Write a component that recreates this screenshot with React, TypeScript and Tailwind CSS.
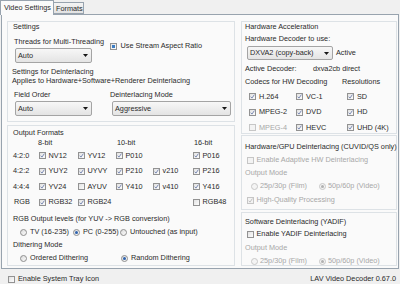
import type { ReactNode } from "react";

type BoxState = "on" | "off" | "mixed";

const Box = ({ state, disabled }: { state: BoxState; disabled?: boolean }) => (
  <span
    className={`relative block w-[7px] h-[7px] shrink-0 border ${
      disabled
        ? "border-[#c6c6c6] bg-[#f3f3f3]"
        : "border-[#929292] bg-gradient-to-br from-[#e2e2e2] to-[#fcfcfc]"
    }`}
  >
    {state === "on" && (
      <svg className="absolute left-0 top-0" width="5" height="5" viewBox="0 0 5 5">
        <path
          d="M0.7 2.7 L2 4.1 L4.4 0.6"
          fill="none"
          stroke={disabled ? "#b4b4b4" : "#5f72a6"}
          strokeWidth="0.8"
        />
      </svg>
    )}
    {state === "mixed" && <span className="absolute inset-[1px] bg-[#3c7cc2]" />}
  </span>
);

const Dot = ({ on, disabled }: { on?: boolean; disabled?: boolean }) => (
  <span
    className={`flex items-center justify-center w-[7px] h-[7px] shrink-0 rounded-full border ${
      disabled
        ? "border-[#c8c8c8] bg-[#f4f4f4]"
        : "border-[#8e8e8e] bg-gradient-to-br from-[#dcdcdc] to-[#fbfbfb]"
    }`}
  >
    {on && (
      <span
        className={`block w-[3px] h-[3px] rounded-full ${disabled ? "bg-[#b0b0b0]" : "bg-[#2e62ad]"}`}
      />
    )}
  </span>
);

const Check = ({
  label,
  state = "on",
  disabled,
  className = "",
  gap = "ml-[2.5px]",
}: {
  label: string;
  state?: BoxState;
  disabled?: boolean;
  className?: string;
  gap?: string;
}) => (
  <div className={`flex items-center h-[8px] ${className}`}>
    <Box state={state} disabled={disabled} />
    <span className={`${gap} whitespace-nowrap ${disabled ? "text-[#a8a8a8]" : ""}`}>{label}</span>
  </div>
);

const Radio = ({
  label,
  on,
  disabled,
  className = "",
  gap = "ml-[3px]",
}: {
  label: string;
  on?: boolean;
  disabled?: boolean;
  className?: string;
  gap?: string;
}) => (
  <div className={`flex items-center h-[8px] shrink-0 ${className}`}>
    <Dot on={on} disabled={disabled} />
    <span className={`${gap} whitespace-nowrap ${disabled ? "text-[#a8a8a8]" : ""}`}>{label}</span>
  </div>
);

const Select = ({ value, className = "" }: { value: string; className?: string }) => (
  <div
    className={`flex items-center justify-between shrink-0 border border-[#a4a4a4] rounded-[2px] bg-gradient-to-b from-[#f7f7f7] to-[#e4e4e4] pl-[2px] pr-[3px] ${className}`}
  >
    <span className="whitespace-nowrap">{value}</span>
    <svg width="5" height="3" viewBox="0 0 5 3">
      <path d="M0 0H5L2.5 3Z" fill="#161616" />
    </svg>
  </div>
);

const Group = ({ className = "", children }: { className?: string; children: ReactNode }) => (
  <div className={`border border-[#dde2e6] ${className}`}>{children}</div>
);

const cols = "grid grid-cols-[26px_39px_38px_37px_40px_1fr] items-center";

const formats: { label: string; cells: ([string, boolean] | null)[] }[] = [
  { label: "4:2:0", cells: [["NV12", true], ["YV12", true], ["P010", true], null, ["P016", true]] },
  { label: "4:2:2", cells: [["YUY2", true], ["UYVY", true], ["P210", true], ["v210", true], ["P216", true]] },
  { label: "4:4:4", cells: [["YV24", true], ["AYUV", false], ["Y410", true], ["v410", true], ["Y416", true]] },
  { label: "RGB", cells: [["RGB32", true], ["RGB24", true], null, null, ["RGB48", false]] },
];

const codecs: [string, boolean, boolean][][] = [
  [["H.264", true, false], ["VC-1", true, false], ["SD", true, false]],
  [["MPEG-2", true, false], ["DVD", true, false], ["HD", true, false]],
  [["MPEG-4", false, true], ["HEVC", true, false], ["UHD (4K)", true, false]],
];

export default function App() {
  return (
    <div className="w-[400px] h-[284px] overflow-hidden bg-[#f0f0f0] text-[#2a2a2a] text-[7.3px] leading-[8px] font-['Liberation_Sans','Arial',sans-serif]">
      {/* tabs */}
      <div className="flex items-end h-[14px]">
        <div className="relative z-10 w-[54px] h-[15px] -mb-px border border-b-0 border-[#98a3ae] bg-[#fafafa] pl-[3px] pt-[3px]">
          Video Settings
        </div>
        <div className="w-[30px] h-[12px] border border-l-0 border-[#98a3ae] bg-gradient-to-b from-[#f4f4f4] to-[#e2e2e2] pl-[2px] pt-[2px]">
          Formats
        </div>
      </div>

      {/* tab body */}
      <div className="ml-px w-[398px] h-[255px] border border-[#98a3ae] bg-[#fafafa] flex pl-[5px] pt-[6px]">
        {/* left column */}
        <div className="w-[228px] flex flex-col">
          <Group className="h-[101px] pl-[5px]">
            <div className="mt-px h-[8px]">Settings</div>
            <div className="mt-[7px] flex">
              <div className="w-[97px]">
                <div className="ml-px h-[8px]">Threads for Multi-Threading</div>
                <Select value="Auto" className="mt-[2px] ml-[2px] w-[77px] h-[15px]" />
              </div>
              <Check label="Use Stream Aspect Ratio" state="mixed" className="mt-[4px]" gap="ml-[3.5px]" />
            </div>
            <div className="mt-[5px] -ml-px h-[8px]">Settings for Deinterlacing</div>
            <div className="mt-px -ml-px h-[8px]">Applies to Hardware+Software+Renderer Deinterlacing</div>
            <div className="mt-[6px] flex h-[8px]">
              <div className="w-[97px] pl-px">Field Order</div>
              <div>Deinterlacing Mode</div>
            </div>
            <div className="mt-[2px] flex">
              <Select value="Auto" className="ml-[2px] w-[77px] h-[15px]" />
              <Select value="Aggressive" className="ml-[20px] w-[119px] h-[15px]" />
            </div>
          </Group>

          <Group className="mt-[3px] h-[141px] pl-[5px]">
            <div className="mt-[3px] h-[8px]">Output Formats</div>
            <div className={`mt-[2px] h-[8px] ${cols}`}>
              <span />
              <span className="-ml-px">8-bit</span>
              <span />
              <span className="pl-px">10-bit</span>
              <span />
              <span className="pl-px">16-bit</span>
            </div>
            <div className="mt-px">
              {formats.map((row) => (
                <div key={row.label} className={`h-[15.5px] ${cols}`}>
                  <span className={row.label === "RGB" ? "pl-px" : ""}>{row.label}</span>
                  {row.cells.map((c, i) =>
                    c ? <Check key={i} label={c[0]} state={c[1] ? "on" : "off"} /> : <span key={i} />
                  )}
                </div>
              ))}
            </div>
            <div className="mt-[5px] h-[8px]">RGB Output levels (for YUV {"->"} RGB conversion)</div>
            <div className="mt-[5px] ml-[7px] flex">
              <Radio label="TV (16-235)" className="w-[53px]" />
              <Radio label="PC (0-255)" on className="w-[47px]" />
              <Radio label="Untouched (as input)" />
            </div>
            <div className="mt-[5px] h-[8px]">Dithering Mode</div>
            <div className="mt-[5px] ml-[7px] flex">
              <Radio label="Ordered Dithering" className="w-[101px]" />
              <Radio label="Random Dithering" on />
            </div>
          </Group>
        </div>

        {/* right column */}
        <div className="ml-[6px] w-[156px] flex flex-col">
          <Group className="h-[113px] pl-[3px]">
            <div className="mt-px h-[8px]">Hardware Acceleration</div>
            <div className="mt-[4px] h-[8px]">Hardware Decoder to use:</div>
            <div className="mt-[3px] flex items-center h-[14px]">
              <Select value="DXVA2 (copy-back)" className="ml-[2px] w-[86px] h-[14px]" />
              <span className="ml-[3px]">Active</span>
            </div>
            <div className="mt-[5px] flex h-[8px]">
              <span className="w-[68px]">Active Decoder:</span>
              <span>dxva2cb direct</span>
            </div>
            <div className="mt-[5px] flex h-[8px]">
              <span className="w-[97px]">Codecs for HW Decoding</span>
              <span>Resolutions</span>
            </div>
            <div className="mt-[3px] ml-[4px]">
              {codecs.map((row, r) => (
                <div key={r} className="flex items-center h-[15.5px]">
                  <div className="w-[47px]">
                    <Check label={row[0][0]} state={row[0][1] ? "on" : "off"} disabled={row[0][2]} gap="ml-[3px]" />
                  </div>
                  <div className="w-[51px]">
                    <Check label={row[1][0]} state={row[1][1] ? "on" : "off"} gap="ml-[3px]" />
                  </div>
                  <Check label={row[2][0]} state={row[2][1] ? "on" : "off"} gap="ml-[3px]" />
                </div>
              ))}
            </div>
          </Group>

          <Group className="mt-px h-[75px] pl-[3px]">
            <div className="mt-[7px] h-[8px] whitespace-nowrap">Hardware/GPU Deinterlacing (CUVID/QS only)</div>
            <Check label="Enable Adaptive HW Deinterlacing" state="off" disabled className="mt-[5px] ml-[2px]" />
            <div className="mt-[5px] h-[8px] text-[#a8a8a8]">Output Mode</div>
            <div className="mt-[5px] ml-[6px] flex">
              <Radio label="25p/30p (Film)" disabled className="w-[68px]" gap="ml-[2px]" />
              <Radio label="50p/60p (Video)" on disabled gap="ml-[2px]" />
            </div>
            <Check label="High-Quality Processing" disabled className="mt-[6px] ml-[2px]" />
          </Group>

          <Group className="mt-[2px] h-[54px] pl-[3px]">
            <div className="mt-[5px] h-[8px]">Software Deinterlacing (YADIF)</div>
            <Check label="Enable YADIF Deinterlacing" state="off" className="mt-[4px] ml-[2px]" />
            <div className="mt-[6px] h-[8px] text-[#a8a8a8]">Output Mode</div>
            <div className="mt-[5px] ml-[6px] flex">
              <Radio label="25p/30p (Film)" disabled className="w-[68px]" gap="ml-[2px]" />
              <Radio label="50p/60p (Video)" on disabled gap="ml-[2px]" />
            </div>
          </Group>
        </div>
      </div>

      {/* footer */}
      <div className="mt-[6px] flex items-center justify-between h-[8px] pl-[8px] pr-[4px]">
        <Check label="Enable System Tray Icon" state="off" gap="ml-[3px]" />
        <span>LAV Video Decoder 0.67.0</span>
      </div>
    </div>
  );
}
